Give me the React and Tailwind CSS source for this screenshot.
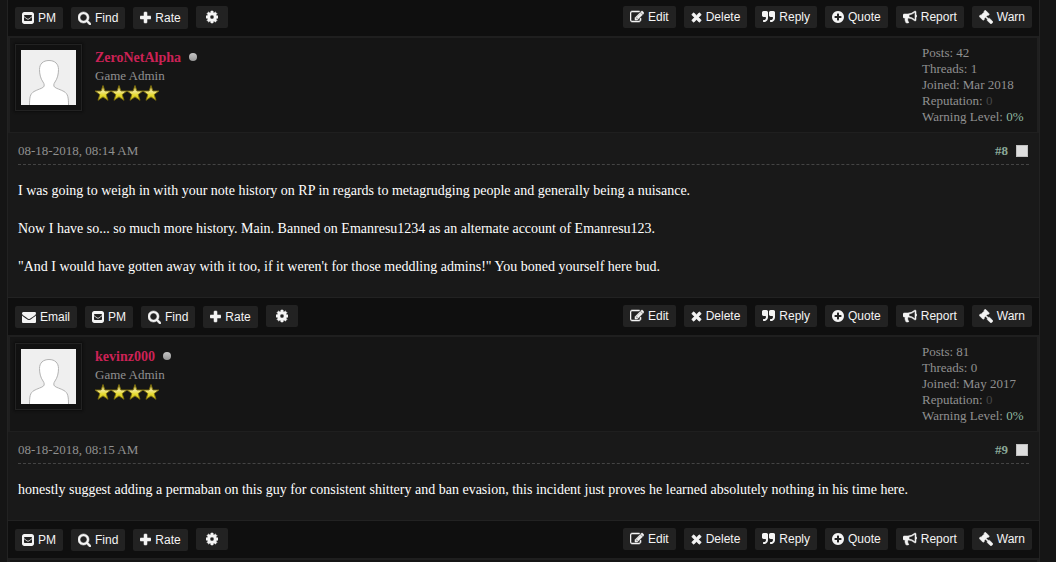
import React from "react";

const ICONS = {
  edit: ["0 0 1792 1792", "w-[14px]", "M888 1184l116-116-152-152-116 116v56h96v96h56zm440-720q-16-16-33 1l-350 350q-17 17-1 33t33-1l350-350q17-17 1-33zm80 594v190q0 119-84.5 203.5t-203.5 84.5h-832q-119 0-203.5-84.5t-84.5-203.5v-832q0-119 84.5-203.5t203.5-84.5h832q63 0 117 25 15 7 18 23 3 17-9 29l-49 49q-14 14-32 8-23-6-45-6h-832q-66 0-113 47t-47 113v832q0 66 47 113t113 47h832q66 0 113-47t47-113v-126q0-13 9-22l64-64q15-15 35-7t20 29zm-96-738l288 288-672 672h-288v-288zm444 132l-92 92-288-288 92-92q28-28 68-28t68 28l152 152q28 28 28 68t-28 68z"],
  times: ["192 0 1408 1792", "w-[11px]", "M1490 1322q0 40-28 68l-136 136q-28 28-68 28t-68-28l-294-294-294 294q-28 28-68 28t-68-28l-136-136q-28-28-28-68t28-68l294-294-294-294q-28-28-28-68t28-68l136-136q28-28 68-28t68 28l294 294 294-294q28-28 68-28t68 28l136 136q28 28 28 68t-28 68l-294 294 294 294q28 28 28 68z"],
  quote: ["64 0 1664 1792", "w-[13px]", "M832 320v704q0 104-40.5 198.5t-109.5 163.5-163.5 109.5-198.5 40.5h-64q-26 0-45-19t-19-45v-128q0-26 19-45t45-19h64q106 0 181-75t75-181v-32q0-40-28-68t-68-28h-224q-80 0-136-56t-56-136v-384q0-80 56-136t136-56h384q80 0 136 56t56 136zm896 0v704q0 104-40.5 198.5t-109.5 163.5-163.5 109.5-198.5 40.5h-64q-26 0-45-19t-19-45v-128q0-26 19-45t45-19h64q106 0 181-75t75-181v-32q0-40-28-68t-68-28h-224q-80 0-136-56t-56-136v-384q0-80 56-136t136-56h384q80 0 136 56t56 136z"],
  plusCircle: ["128 0 1536 1792", "w-[12px]", "M1344 960v-128q0-26-19-45t-45-19h-256v-256q0-26-19-45t-45-19h-128q-26 0-45 19t-19 45v256h-256q-26 0-45 19t-19 45v128q0 26 19 45t45 19h256v256q0 26 19 45t45 19h128q26 0 45-19t19-45v-256h256q26 0 45-19t19-45zm320-64q0 209-103 385.5t-279.5 279.5-385.5 103-385.5-103-279.5-279.5-103-385.5 103-385.5 279.5-279.5 385.5-103 385.5 103 279.5 279.5 103 385.5z"],
  bullhorn: ["0 0 1792 1792", "w-[14px]", "M1664 640q53 0 90.5 37.5t37.5 90.5-37.5 90.5-90.5 37.5v384q0 52-38 90t-90 38q-417-347-812-380-58 19-91 66t-31 100.5 40 92.5q-20 33-23 65.5t6 58 33.5 55 48 50 61.5 50.5q-29 58-111.5 83t-168.5 11.5-132-55.5q-7-23-29.5-87.5t-32-94.5-23-89-15-101 3.5-98.5 22-110.5h-122q-66 0-113-47t-47-113v-192q0-66 47-113t113-47h480q435 0 896-384 52 0 90 38t38 90v384zm-128 604v-954q-394 302-768 343v270q377 42 768 341z"],
  gavel: ["0 0 1792 1792", "w-[14px]", "M1771 1536q0 53-37 90l-107 108q-39 37-91 37-53 0-90-37l-363-364q-38-36-38-90 0-53 43-96l-256-256-126 126q-14 14-34 14t-34-14q2 2 12.5 12t12.5 13 10 11.5 10 13.5 6 13.5 5.5 16.5 1.5 18q0 38-28 68-3 3-16.5 18t-19 20.5-18.5 16.5-22 15.5-22 9-26 4.5q-40 0-68-28l-408-408q-28-28-28-68 0-13 4.5-26t9-22 15.5-22 16.5-18.5 20.5-19 18-16.5q30-28 68-28 10 0 18 1.5t16.5 5.5 13.5 6 13.5 10 11.5 10 13 12.5 12 12.5q-14-14-14-34t14-34l348-348q14-14 34-14t34 14q-2-2-12.5-12t-12.5-13-10-11.5-10-13.5-6-13.5-5.5-16.5-1.5-18q0-38 28-68 3-3 16.5-18t19-20.5 18.5-16.5 22-15.5 22-9 26-4.5q40 0 68 28l408 408q28 28 28 68 0 13-4.5 26t-9 22-15.5 22-16.5 18.5-20.5 19-18 16.5q-30 28-68 28-10 0-18-1.5t-16.5-5.5-13.5-6-13.5-10-11.5-10-13-12.5-12-12.5q14 14 14 34t-14 34l-126 126 256 256q43-43 96-43 52 0 91 37l363 363q37 39 37 91z"],
  search: ["64 0 1664 1792", "w-[13px]", "M1216 832q0-185-131.5-316.5t-316.5-131.5-316.5 131.5-131.5 316.5 131.5 316.5 316.5 131.5 316.5-131.5 131.5-316.5zm512 832q0 52-38 90t-90 38q-54 0-90-38l-343-342q-179 124-399 124-143 0-273.5-55.5t-225-150-150-225-55.5-273.5 55.5-273.5 150-225 225-150 273.5-55.5 273.5 55.5 225 150 150 225 55.5 273.5q0 220-124 399l343 343q37 37 37 90z"],
  plus: ["192 0 1408 1792", "w-[11px]", "M1600 736v192q0 40-28 68t-68 28h-416v416q0 40-28 68t-68 28h-192q-40 0-68-28t-28-68v-416h-416q-40 0-68-28t-28-68v-192q0-40 28-68t68-28h416v-416q0-40 28-68t68-28h192q40 0 68 28t28 68v416h416q40 0 68 28t28 68z"],
  cog: ["128 0 1536 1792", "w-[12px]", "M1152 896q0-106-75-181t-181-75-181 75-75 181 75 181 181 75 181-75 75-181zm512-109v222q0 12-8 23t-20 13l-185 28q-19 54-39 91 35 50 107 138 10 12 10 25t-9 23q-27 37-99 108t-94 71q-12 0-26-9l-138-108q-44 23-91 38-16 136-29 186-7 28-36 28h-222q-14 0-24.5-8.5t-11.5-21.5l-28-184q-49-16-90-37l-141 107q-10 9-25 9-14 0-25-11-126-114-165-168-7-10-7-23 0-12 8-23 15-21 51-66.5t54-70.5q-27-50-41-99l-183-27q-13-2-21-12.5t-8-23.5v-222q0-12 8-23t19-13l186-28q14-46 39-92-40-57-107-138-10-12-10-24 0-10 9-23 26-36 98.5-107.5t94.5-71.5q13 0 26 10l138 107q44-23 91-38 16-136 29-186 7-28 36-28h222q14 0 24.5 8.5t11.5 21.5l28 184q49 16 90 37l142-107q9-9 24-9 13 0 25 10 129 119 165 170 7 8 7 22 0 12-8 23-15 21-51 66.5t-54 70.5q26 50 41 98l183 28q13 2 21 12.5t8 23.5z"],
  envelope: ["0 0 1792 1792", "w-[14px]", "M1792 710v794q0 66-47 113t-113 47h-1472q-66 0-113-47t-47-113v-794q44 49 101 87 362 246 497 345 57 42 92.5 65.5t94.5 48 110 24.5h2q51 0 110-24.5t94.5-48 92.5-65.5q170-123 498-345 57-39 100-87zm0-294q0 79-49 151t-122 123q-376 261-468 325-10 7-42.5 31t-54 38.5-52 32.5-57.5 27-50 9h-2q-23 0-50-9t-57.5-27-52-32.5-54-38.5-42.5-31q-91-64-262-182.5t-205-142.5q-62-42-117-115.5t-55-136.5q0-78 41.5-130t118.5-52h1472q65 0 112.5 47t47.5 113z"],
  envelopeSquare: ["128 0 1536 1792", "w-[12px]", "M416 128h960q119 0 203.5 84.5t84.5 203.5v960q0 119-84.5 203.5t-203.5 84.5h-960q-119 0-203.5-84.5t-84.5-203.5v-960q0-119 84.5-203.5t203.5-84.5zM384 780v404q0 96 96 96h832q96 0 96-96v-404q-60 60-330 236-100 72-182 72t-182-72q-270-176-330-236zM384 620q0 60 80 116 180 120 310 208 80 56 122 56t122-56q130-88 310-208 80-56 80-116 0-108-96-108h-832q-96 0-96 108z"],
};

const HEAVY_ICONS = new Set(["edit", "times", "bullhorn", "gavel", "search", "plus", "cog"]);

function Icon({ name }) {
  const [viewBox, width, d] = ICONS[name];
  return (
    <svg
      viewBox={viewBox}
      className={`h-[14px] shrink-0 ${width}`}
      fill="currentColor"
      fillRule="evenodd"
      stroke={HEAVY_ICONS.has(name) ? "currentColor" : "none"}
      strokeWidth="70"
      aria-hidden="true"
    >
      <path d={d} />
    </svg>
  );
}

function ActionButton({ icon, label }) {
  return (
    <button
      type="button"
      className="flex h-[22px] items-center gap-1 rounded-xs bg-[#222222] px-[7px] text-xs whitespace-nowrap text-[#f4f4f4] hover:bg-[#2e2e2e]"
    >
      <Icon name={icon} />
      {label}
    </button>
  );
}

const CONTACT_ICONS = { Email: "envelope", PM: "envelopeSquare", Find: "search", Rate: "plus" };

const MOD_ACTIONS = [
  ["edit", "Edit"],
  ["times", "Delete"],
  ["quote", "Reply"],
  ["plusCircle", "Quote"],
  ["bullhorn", "Report"],
  ["gavel", "Warn"],
];

function ActionBar({ contacts }) {
  return (
    <div className="flex items-start justify-between border-t border-[#222222] bg-[#0f0f0f] p-[7px] font-['Liberation_Sans',Arial,sans-serif]">
      <div className="flex items-start gap-2">
        <div className="flex gap-2 pt-px">
          {contacts.map((label) => (
            <ActionButton key={label} icon={CONTACT_ICONS[label]} label={label} />
          ))}
        </div>
        <button
          type="button"
          aria-label="User options"
          className="flex h-[22px] items-center rounded-xs bg-[#222222] px-[10px] text-[#f4f4f4] hover:bg-[#2e2e2e]"
        >
          <Icon name="cog" />
        </button>
      </div>
      <div className="flex gap-2">
        {MOD_ACTIONS.map(([icon, label]) => (
          <ActionButton key={label} icon={icon} label={label} />
        ))}
      </div>
    </div>
  );
}

function Avatar() {
  return (
    <div className="h-[67px] w-[67px] shrink-0 border border-[#222222] bg-[#111111] p-[5px] shadow-[0_0_2px_1px_#0d0d0d]">
      <svg viewBox="0 0 55 55" className="h-[55px] w-[55px]" role="img" aria-label="Default avatar">
        <rect width="55" height="55" fill="#efefef" />
        <path
          d="M8.500 56C8.500 47 9 44 13 41.500C16.500 39.500 21 38.500 22.500 37C23.500 36 23.500 34 22 32C19.500 28.500 18.500 24 18.500 19.500C18.500 14 22 10.500 28 10.500C34 10.500 37.500 14 37.500 19.500C37.500 24 36.500 28.500 34 32C32.500 34 32.500 36 33.500 37C35 38.500 39.500 39.500 43 41.500C47 44 47.500 47 47.500 56Z"
          fill="#ffffff"
          stroke="#b3b3b3"
          strokeWidth="1"
        />
      </svg>
    </div>
  );
}

function Stars() {
  return (
    <svg viewBox="0 0 64 16" className="h-4 w-16" role="img" aria-label="4 stars">
      <defs>
        <linearGradient id="star-fill" x1="0" y1="0" x2="0" y2="1">
          <stop offset="0" stopColor="#a08e1c" />
          <stop offset="0.4" stopColor="#f0e68c" />
          <stop offset="0.65" stopColor="#e8dc30" />
          <stop offset="1" stopColor="#c9bb20" />
        </linearGradient>
      </defs>
      {[0, 16, 32, 48].map((x) => (
        <path
          key={x}
          transform={`translate(${x} 0)`}
          d="M8 0.500L9.900 6H15.800L11.200 9.600L13 15.300L8 11.900L3 15.300L4.800 9.600L0.200 6H6.100Z"
          fill="url(#star-fill)"
          stroke="#80710c"
          strokeWidth="0.900"
        />
      ))}
    </svg>
  );
}

function Post({ author, stats, date, number, body, contacts }) {
  return (
    <article>
      <header className="flex items-start justify-between border-2 border-b border-[#1f1f1f] bg-[#151515] pt-[6px] pr-[12px] pb-[7px] pl-[5px] text-[13px] leading-4 text-[#909090]">
        <div className="flex gap-[13px]">
          <Avatar />
          <div className="pt-[5px]">
            <div className="flex items-center gap-2">
              <a href="#profile" className="text-[14px] leading-[18px] font-bold text-[#cc2255]">{author}</a>
              <span title="Offline" className="mb-0.5 h-2 w-2 rounded-full bg-linear-to-b from-[#c4c4c4] to-[#969696]" />
            </div>
            <div className="leading-[18px]">Game Admin</div>
            <Stars />
          </div>
        </div>
        <div className="w-[103px] pt-px whitespace-nowrap">
          <div>Posts: {stats.posts}</div>
          <div>Threads: {stats.threads}</div>
          <div>Joined: {stats.joined}</div>
          <div>Reputation: <span className="text-[#444444]">0</span></div>
          <div>Warning Level: <a href="#warnings" className="text-[#8fb8a0]">0%</a></div>
        </div>
      </header>
      <div className="px-[10px] pt-[9px] pb-[21px]">
        <div className="flex items-center justify-between border-b border-dashed border-[#444444] pb-1 text-[13px] leading-[18px] text-[#909090]">
          <time>{date}</time>
          <div className="flex items-center gap-2">
            <a href="#post" className="font-bold text-[#8aa898]">#{number}</a>
            <input
              type="checkbox"
              aria-label={`Select post #${number}`}
              className="mr-px h-3 w-3 appearance-none border border-[#c0c0c0] bg-[#dddddd] checked:bg-[#8fb8a0]"
            />
          </div>
        </div>
        <div className="flex flex-col gap-[19px] pt-4 text-[14px] leading-[19px] text-white">
          {body.map((line) => (
            <p key={line}>{line}</p>
          ))}
        </div>
      </div>
      <ActionBar contacts={contacts} />
    </article>
  );
}

export default function App() {
  return (
    <div className="min-h-screen bg-[#151515] pr-4 pl-[7px] font-['Liberation_Serif','Times_New_Roman',serif]">
      <main className="h-screen overflow-hidden border-x border-[#222222] bg-[#191919]">
        <div className="-mt-[2px]">
          <ActionBar contacts={["PM", "Find", "Rate"]} />
          <Post
            author="ZeroNetAlpha"
            stats={{ posts: 42, threads: 1, joined: "Mar 2018" }}
            date="08-18-2018, 08:14 AM"
            number={8}
            body={[
              "I was going to weigh in with your note history on RP in regards to metagrudging people and generally being a nuisance.",
              "Now I have so... so much more history. Main. Banned on Emanresu1234 as an alternate account of Emanresu123.",
              "\"And I would have gotten away with it too, if it weren't for those meddling admins!\" You boned yourself here bud.",
            ]}
            contacts={["Email", "PM", "Find", "Rate"]}
          />
          <Post
            author="kevinz000"
            stats={{ posts: 81, threads: 0, joined: "May 2017" }}
            date="08-18-2018, 08:15 AM"
            number={9}
            body={[
              "honestly suggest adding a permaban on this guy for consistent shittery and ban evasion, this incident just proves he learned absolutely nothing in his time here.",
            ]}
            contacts={["PM", "Find", "Rate"]}
          />
          <div className="h-4 border-2 border-[#1f1f1f] bg-[#151515]" />
        </div>
      </main>
    </div>
  );
}
